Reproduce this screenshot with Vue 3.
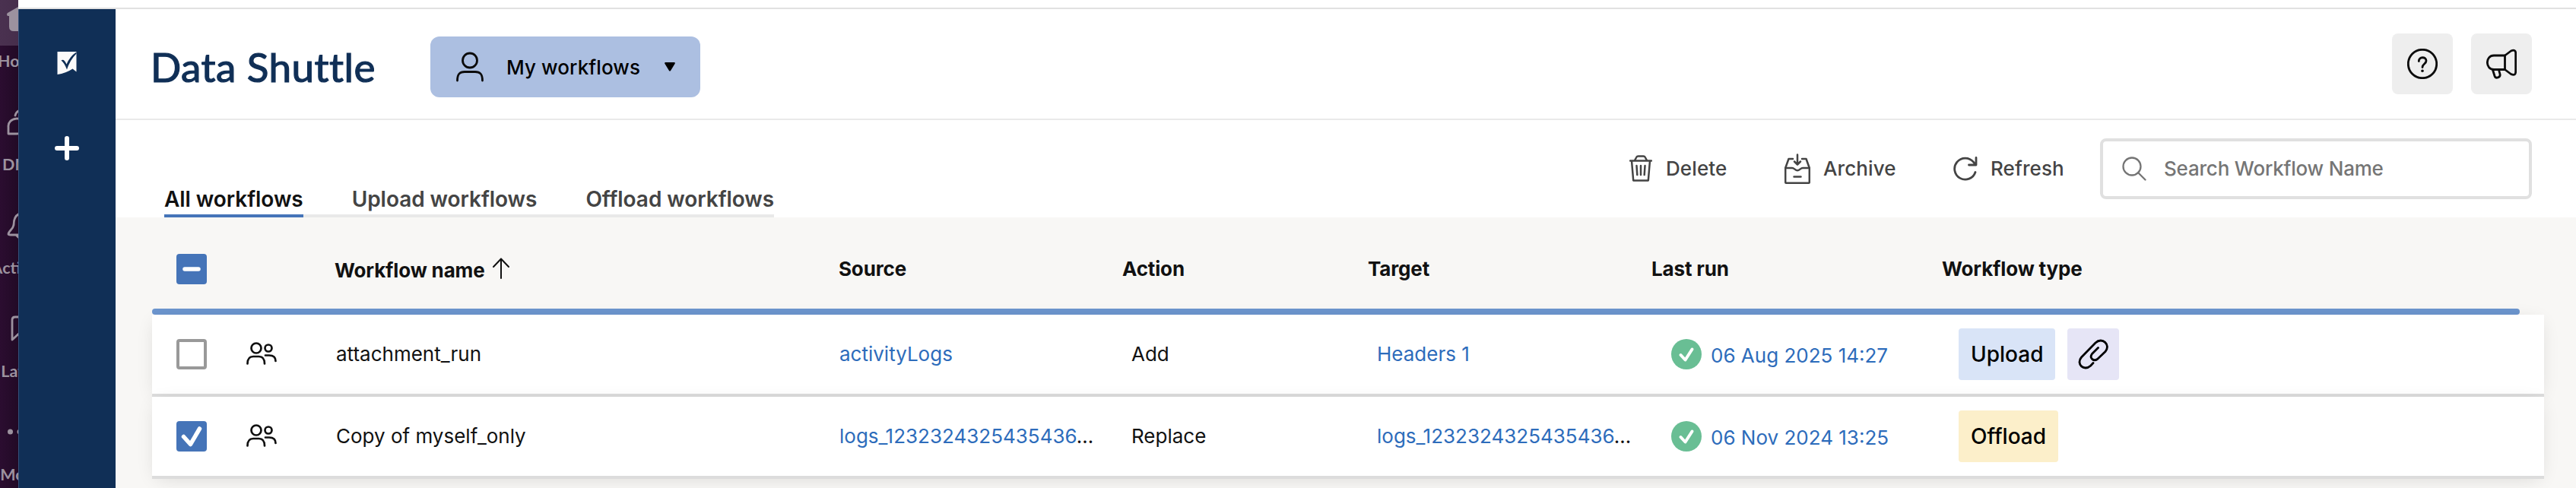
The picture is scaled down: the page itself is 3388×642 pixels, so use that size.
<template>
  <div class="screen">
    <!-- 后方的聊天应用侧栏，只露出左边一条 -->
    <aside class="dock">
      <div class="dock-inner">
        <div v-for="item in dockItems" :key="item.label" class="dock-item">
          <div class="dock-tile" :class="{ active: item.active }">
            <svg width="40" height="40" viewBox="0 0 40 40" :class="item.solid ? 'solid' : 'line'">
              <path v-for="d in item.paths" :key="d" :d="d" />
            </svg>
          </div>
          <span class="dock-label">{{ item.label }}</span>
        </div>
      </div>
    </aside>

    <div class="window">
      <div class="window-top"></div>
      <div class="window-body">
        <nav class="sidebar">
          <svg class="logo" width="26" height="30" viewBox="0 0 26 30">
            <path fill="#fafafa" d="M0.500 0H25.500V26.500L20.500 22.500Q11.500 28.500 0.500 30Z" />
            <path fill="#102f56" d="M5.500 11.500Q9 8.500 12.500 16.500Q17 6 25.500 0.500V2.500Q17 11 13 23.500Q9.500 14.500 5.500 11.500Z" />
          </svg>
          <svg class="plus" width="32" height="32" viewBox="0 0 32 32">
            <path d="M16 3V29M3 16H29" />
          </svg>
        </nav>

        <main class="main">
          <header class="header">
            <div class="header-left">
              <h1>Data Shuttle</h1>
              <button class="scope-btn">
                <svg class="icon" width="36" height="40" viewBox="0 0 36 40">
                  <circle cx="18" cy="11.500" r="9.500" />
                  <path d="M1.500 38C1.500 29 5 26.500 11 26.500H25C31 26.500 34.500 29 34.500 38" />
                </svg>
                <span>My workflows</span>
                <svg class="caret" width="14" height="12" viewBox="0 0 14 12">
                  <path d="M1 0H13Q14.500 0.500 13.500 2L8 11Q7 12 6 11L0.500 2Q-0.500 0.500 1 0Z" />
                </svg>
              </button>
            </div>
            <div class="header-right">
              <button class="icon-btn">
                <svg class="icon" width="40" height="40" viewBox="0 0 40 40">
                  <circle cx="20" cy="20" r="18.700" />
                  <path d="M15.300 16.500C15 10.500 25 10 25 16C25 20 20 20 20 24.500" />
                  <circle class="dot" cx="20" cy="29.300" r="1.800" />
                </svg>
              </button>
              <button class="icon-btn">
                <svg class="icon" width="40" height="40" viewBox="0 0 40 40">
                  <path d="M24.500 9H10C-1.500 9-1.500 27.500 10 27.500H24.500Z" />
                  <path d="M24.500 9L32.500 3Q38.700 0.500 38.700 6V30Q38.700 36.500 32.500 33.500L24.500 27.500" />
                  <path d="M8.500 28L11 36C12.500 40 19 38 18 33.500L16.500 28" />
                </svg>
              </button>
            </div>
          </header>

          <section class="toolbar">
            <div class="tabs">
              <a
                v-for="tab in tabs"
                :key="tab"
                class="tab"
                :class="{ active: tab === activeTab }"
                @click="activeTab = tab"
              >{{ tab }}</a>
            </div>
            <div class="actions">
              <button class="action delete">
                <svg width="30" height="36" viewBox="0 0 30 36">
                  <path d="M1 7.500H29M3 7.500L5.200 33.500H24.800L27 7.500M7 7L9.500 2.500Q10 1.500 11.500 1.500H18.500Q20 1.500 20.500 2.500L23 7" />
                  <path d="M9.500 14L10.300 26M15 14V26M20.500 14L19.700 26" />
                </svg>
                <span>Delete</span>
              </button>
              <button class="action archive">
                <svg width="34" height="40" viewBox="0 0 34 40">
                  <path d="M11 7H5.500L1.200 19V37.500Q1.200 38.800 2.500 38.800H31.500Q32.800 38.800 32.800 37.500V19L28.500 7H23" />
                  <path d="M1.200 19H10C13 19 14 22.300 17 22.300C20 22.300 21 19 24 19H32.800M12.500 30.500H21.500" />
                  <path d="M17 1.500V14M13 10.500L17 14.500L21 10.500" />
                </svg>
                <span>Archive</span>
              </button>
              <button class="action refresh">
                <svg width="32" height="32" viewBox="0 0 32 32">
                  <path d="M29 20.500A14 14 0 1 1 26.500 7.200L29.500 11M30 1.500V11H20.500" />
                </svg>
                <span>Refresh</span>
              </button>
              <label class="search">
                <svg width="32" height="32" viewBox="0 0 32 32">
                  <circle cx="13" cy="13" r="11.500" />
                  <path d="M21 21L30.500 30.500" />
                </svg>
                <input v-model="keyword" type="text" placeholder="Search Workflow Name" />
              </label>
            </div>
          </section>

          <section class="table">
            <div class="grid thead">
              <span class="checkbox checked">
                <svg width="40" height="40" viewBox="0 0 40 40"><path class="minus" d="M11 20H29" /></svg>
              </span>
              <span></span>
              <span class="th sort">
                Workflow name
                <svg width="22" height="28" viewBox="0 0 22 28">
                  <path d="M11 27V1.500M1 12L11 1.500L21 12" />
                </svg>
              </span>
              <span v-for="name in columns" :key="name" class="th">{{ name }}</span>
            </div>
            <div class="divider"></div>

            <div v-for="row in rows" :key="row.name" class="grid row">
              <span class="checkbox" :class="{ checked: row.checked }" @click="row.checked = !row.checked">
                <svg v-if="row.checked" width="40" height="40" viewBox="0 0 40 40">
                  <path d="M9.500 20.500L18.500 30.500L30.500 10" />
                </svg>
              </span>
              <svg class="people" width="40" height="30" viewBox="0 0 40 30">
                <circle cx="13" cy="8" r="6.500" />
                <circle cx="29" cy="8" r="4.500" />
                <path d="M1.500 28.500C1.500 21.500 4.500 19 9 19H16.500C21 19 24 21.500 24 28.500M25 17.500H30C36 17.500 38.500 20 38.500 25" />
              </svg>
              <span class="td">{{ row.name }}</span>
              <span class="td"><a>{{ row.source }}</a>{{ row.cut ? '…' : '' }}</span>
              <span class="td shifted">{{ row.action }}</span>
              <span class="td shifted"><a>{{ row.target }}</a>{{ row.cut ? '…' : '' }}</span>
              <span class="td last-run">
                <svg width="40" height="40" viewBox="0 0 40 40">
                  <circle cx="20" cy="20" r="20" />
                  <path d="M12.500 21L18.500 27.500L27.500 13.500" />
                </svg>
                <a>{{ row.lastRun }}</a>
              </span>
              <span class="tags">
                <span class="tag" :class="row.type.toLowerCase()">{{ row.type }}</span>
                <span v-if="row.attachment" class="tag clip">
                  <svg width="40" height="40" viewBox="0 0 40 40">
                    <path d="M20 31.500L16.500 35.200C8 43 -3 33 4.500 24L23 5C32-3.500 43.500 8 36 16.500L25.500 26.500C20.500 30 14.500 25 18.500 19.500L26.500 11.500" />
                  </svg>
                </span>
              </span>
            </div>
          </section>
        </main>
      </div>
    </div>
  </div>
</template>

<script setup>
import { ref } from 'vue'

const dockItems = [
  { label: 'Home', active: true, solid: true, paths: ['M1 12L20 1L39 12V16H36V31Q36 36 31 36H9Q3 36 3 30V16H1Q-1 14 1 12Z'] },
  { label: 'DMs', paths: ['M2 35V26A11 10 0 1 1 13 35Z', 'M11 11Q12 6 17 4'] },
  { label: 'Activity', paths: ['M17 4Q9 7 9 19C8 25 2 27 2 31Q2 32 5 32H36', 'M13 33Q15 36 20 37'] },
  { label: 'Later', paths: ['M33 4H11Q7 4 7 8V34L20 22L33 34Z'] },
  {
    label: 'More',
    solid: true,
    paths: ['M1 19a3.500 3.500 0 1 0 7 0a3.500 3.500 0 1 0 -7 0', 'M13.500 19a3.500 3.500 0 1 0 7 0a3.500 3.500 0 1 0 -7 0']
  }
]

const tabs = ['All workflows', 'Upload workflows', 'Offload workflows']
const activeTab = ref('All workflows')
const keyword = ref('')

const columns = ['Source', 'Action', 'Target', 'Last run', 'Workflow type']

const rows = ref([
  {
    name: 'attachment_run',
    checked: false,
    source: 'activityLogs',
    action: 'Add',
    target: 'Headers 1',
    lastRun: '06 Aug 2025 14:27',
    type: 'Upload',
    attachment: true
  },
  {
    name: 'Copy of myself_only',
    checked: true,
    source: 'logs_1232324325435436',
    action: 'Replace',
    target: 'logs_1232324325435436',
    cut: true,
    lastRun: '06 Nov 2024 13:25',
    type: 'Offload'
  }
])
</script>

<style>
body {
  margin: 0;
  overflow: hidden;
}
</style>

<style scoped>
.screen {
  display: flex;
  width: 3388px;
  height: 642px;
  overflow: hidden;
  background: #fff;
  color: #111;
  font-family: Inter, "Liberation Sans", sans-serif;
  font-size: 26px;
  white-space: nowrap;
}

svg {
  display: block;
  flex-shrink: 0;
  fill: none;
  stroke-linecap: round;
  stroke-linejoin: round;
}

button {
  display: flex;
  align-items: center;
  padding: 0;
  border: none;
  background: none;
  color: inherit;
  font: inherit;
}

/* 左侧应用栏 */
.dock {
  width: 24px;
  flex-shrink: 0;
  overflow: hidden;
  background: linear-gradient(90deg, #2b0d30, #220a26);
  color: #9c929f;
  font-family: Lato, sans-serif;
}

.dock-inner {
  width: 58px;
}

.dock-item {
  display: flex;
  flex-direction: column;
  align-items: center;
  height: 136px;
}

.dock-tile {
  display: flex;
  justify-content: center;
  box-sizing: border-box;
  width: 58px;
  height: 60px;
  padding-top: 5px;
  margin-bottom: 6px;
  flex-shrink: 0;
}

.dock-tile.active {
  background: linear-gradient(90deg, #4a3150, #412a46);
}

.dock-tile .solid {
  fill: currentColor;
}

.dock-tile .line {
  stroke: currentColor;
  stroke-width: 2.8;
}

.dock-label {
  margin-right: 6px;
  font-size: 21.5px;
  font-weight: 700;
  line-height: 28px;
}

/* 窗口 */
.window {
  display: flex;
  flex-direction: column;
  flex: 1;
  min-width: 0;
}

.window-top {
  box-sizing: border-box;
  height: 12px;
  border-bottom: 2px solid #e1e1e1;
}

.window-body {
  display: flex;
  flex: 1;
}

.sidebar {
  display: flex;
  flex-direction: column;
  align-items: center;
  box-sizing: border-box;
  width: 128px;
  padding: 56px 1px 0 0;
  flex-shrink: 0;
  background: #102f56;
  border-left: 1px solid #34507a;
}

.plus {
  margin-top: 81px;
  stroke: #fff;
  stroke-width: 6;
}

.main {
  display: flex;
  flex-direction: column;
  flex: 1;
  min-width: 0;
}

/* 顶部标题 */
.header {
  display: flex;
  justify-content: space-between;
  align-items: center;
  box-sizing: border-box;
  height: 146px;
  padding: 0 58px 0 46px;
  border-bottom: 2px solid #e9e9e9;
}

.header-left {
  display: flex;
  align-items: center;
  padding-top: 8px;
}

h1 {
  width: 368px;
  margin: 0;
  color: #102f56;
  font-family: Lato, sans-serif;
  font-size: 53px;
  font-weight: 400;
  line-height: 80px;
  letter-spacing: 0.45px;
  -webkit-text-stroke: 1.2px #102f56;
}

.icon {
  stroke: #0c0c0c;
  stroke-width: 2.8;
}

.icon .dot {
  fill: #0c0c0c;
  stroke: none;
}

.scope-btn {
  box-sizing: border-box;
  width: 355px;
  height: 80px;
  padding-left: 34px;
  border-radius: 12px;
  background: #acbfe1;
  color: #000;
  font-weight: 500;
}

.scope-btn span {
  width: 178px;
  margin: 0 30px 0 29px;
  padding-right: 1px;
  letter-spacing: 0.1px;
}

.caret {
  fill: #000;
}

.header-right {
  display: flex;
  gap: 24px;
}

.icon-btn {
  justify-content: center;
  width: 80px;
  height: 80px;
  border-radius: 8px;
  background: #eee;
}

/* 标签与操作 */
.toolbar {
  display: flex;
  justify-content: space-between;
  align-items: flex-end;
  height: 128px;
  padding: 0 58px 0 64px;
}

.tabs {
  display: flex;
  gap: 64px;
  box-shadow: inset 0 -4px #e9e9e9;
}

.tab {
  padding-bottom: 2px;
  color: #444;
  font-size: 28px;
  font-weight: 600;
  line-height: 36px;
  letter-spacing: -0.06px;
  border-bottom: 4px solid transparent;
}

.tab.active {
  color: #111;
  border-color: #4574b8;
}

.actions {
  display: flex;
  align-items: center;
  height: 80px;
  margin-bottom: 24px;
}

.action {
  color: #444;
  font-weight: 500;
}

.action span {
  padding-bottom: 1px;
  letter-spacing: 0.1px;
}

.action svg {
  stroke: #444;
  stroke-width: 2.5;
}

.delete {
  gap: 18px;
  width: 204px;
}

.archive {
  gap: 17px;
  width: 222px;
}

.refresh {
  gap: 17px;
  width: 193px;
}

.refresh svg {
  stroke-width: 2.8;
}

.search {
  display: flex;
  align-items: center;
  gap: 23px;
  box-sizing: border-box;
  width: 568px;
  height: 80px;
  padding-left: 25px;
  border: 4px solid #e0e0e0;
  border-radius: 8px;
}

.search svg {
  stroke: #757575;
  stroke-width: 2.3;
}

.search input {
  width: 460px;
  padding: 0 0 1px;
  border: none;
  outline: none;
  background: none;
  font: inherit;
  font-weight: 500;
  letter-spacing: -0.2px;
}

.search input::placeholder {
  color: #757575;
  opacity: 1;
}

/* 表格 */
.table {
  flex: 1;
  padding: 0 42px 0 48px;
  background: #f8f7f5;
}

.grid {
  display: grid;
  grid-template-columns: 92px 117px 662px 373px 323px 373px 382px 1fr;
  align-items: center;
  padding-left: 32px;
}

.thead {
  height: 120px;
}

.thead .checkbox {
  margin-top: 16px;
}

.th {
  padding-top: 15px;
  font-weight: 700;
  letter-spacing: -0.15px;
}

.th.sort {
  display: flex;
  align-items: center;
  gap: 10px;
  margin-left: -1px;
  padding-top: 19px;
}

.sort svg {
  margin-top: -5px;
  stroke: #111;
  stroke-width: 2;
}

.divider {
  width: 3114px;
  height: 8px;
  border-radius: 4px;
  background: #6c95ce;
}

.row {
  box-sizing: border-box;
  height: 108px;
  background: #fff;
  border-bottom: 4px solid #dcdcdc;
  box-shadow: 0 4px 24px -6px rgba(0, 0, 0, 0.14);
}

.checkbox {
  box-sizing: border-box;
  width: 40px;
  height: 40px;
  border: 4px solid #999;
  border-radius: 4px;
}

.checkbox.checked {
  border: none;
  background: #4574b8;
}

.checkbox path {
  stroke: #fff;
  stroke-width: 5.5;
}

.people {
  margin-top: -2px;
  stroke: #111;
  stroke-width: 2.7;
}

.td {
  padding: 0 0 2px 1px;
}

.td.shifted {
  padding-left: 12px;
}

.td a {
  color: #2d6cbb;
}

.td.last-run {
  display: flex;
  align-items: center;
  gap: 12px;
  padding: 0 0 0 26px;
}

.last-run a {
  padding-top: 3px;
}

.last-run circle {
  fill: #69be94;
}

.last-run path {
  stroke: #fff;
  stroke-width: 4;
}

.tags {
  display: flex;
  gap: 16px;
  padding-left: 22px;
}

.tag {
  display: flex;
  align-items: center;
  box-sizing: border-box;
  height: 68px;
  padding: 0 16px;
  border-radius: 4px;
  color: #000;
  font-size: 28px;
  font-weight: 500;
}

.tag.upload {
  background: #d9e4f7;
}

.tag.offload {
  background: #fcefca;
}

.tag.clip {
  padding: 0 14px;
  background: #e6e5f6;
}

.clip svg {
  stroke: #000;
  stroke-width: 2.8;
}
</style>
